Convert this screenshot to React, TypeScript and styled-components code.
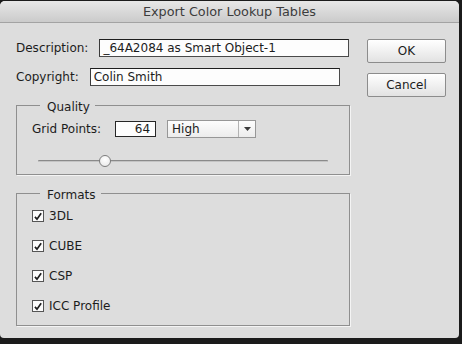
import React, { useState } from 'react';
import styled, { createGlobalStyle } from 'styled-components';

const GlobalStyle = createGlobalStyle`
    html, body {
        margin: 0;
        padding: 0;
        background: #1b1b1b;
    }
    body {
        font-family: "DejaVu Sans", "Liberation Sans", sans-serif;
        font-size: 12px;
        color: #1c1c1c;
    }
`;

const formats = ['3DL', 'CUBE', 'CSP', 'ICC Profile'];

export default function App() {
    const [gridPoints] = useState(64);
    const [checked, setChecked] = useState<boolean[]>([true, true, true, true]);
    // slider position, 0..1
    const sliderValue = 0.23;

    const toggle = (i: number) => {
        setChecked(checked.map((c, idx) => (idx === i ? !c : c)));
    };

    return (
        <>
            <GlobalStyle />
            <Window>
                <TitleBar>Export Color Lookup Tables</TitleBar>
                <Body>
                    <LeftColumn>
                        <FieldRow>
                            <Label>Description:</Label>
                            <TextBox>_64A2084 as Smart Object-1</TextBox>
                        </FieldRow>
                        <FieldRow>
                            <Label>Copyright:</Label>
                            <TextBox>Colin Smith</TextBox>
                        </FieldRow>

                        <GroupBox $bottom={7}>
                            <Legend>Quality</Legend>
                            <GridRow>
                                <Label>Grid Points:</Label>
                                <NumberBox>{gridPoints}</NumberBox>
                                <Select>
                                    <SelectText>High</SelectText>
                                    <SelectArrow>
                                        <svg width="7" height="4" viewBox="0 0 7 4">
                                            <path d="M0 0 H7 L3.5 4 Z" fill="#3a3a3a" />
                                        </svg>
                                    </SelectArrow>
                                </Select>
                            </GridRow>
                            <Slider>
                                <Thumb style={{ left: `${sliderValue * 100}%` }} />
                            </Slider>
                        </GroupBox>

                        <GroupBox $bottom={13} $gap={-1}>
                            <Legend>Formats</Legend>
                            <CheckList>
                                {formats.map((f, i) => (
                                    <CheckRow key={f} onClick={() => toggle(i)}>
                                        <CheckBox>
                                            {checked[i] && (
                                                <svg width="12" height="12" viewBox="0 0 12 12">
                                                    <path d="M2.3 5.8 L4.8 8.6 L9.8 1.6" fill="none" stroke="#1d1d1d" strokeWidth="2" />
                                                </svg>
                                            )}
                                        </CheckBox>
                                        <span>{f}</span>
                                    </CheckRow>
                                ))}
                            </CheckList>
                        </GroupBox>
                    </LeftColumn>

                    <RightColumn>
                        <Button>OK</Button>
                        <Button>Cancel</Button>
                    </RightColumn>
                </Body>
            </Window>
        </>
    );
}

const Window = styled.div`
    width: 459px;
    height: 337px;
    margin-top: 1px;
    background: #dddddd;
    border-radius: 5px 5px 4px 4px;
    overflow: hidden;
    display: flex;
    flex-direction: column;
`;

const TitleBar = styled.div`
    height: 21px;
    line-height: 21px;
    text-align: center;
    font-size: 12.8px;
    color: #3c3c3c;
    background: linear-gradient(#e7e7e7, #cbcbcb);
    border-bottom: 1px solid #a3a3a3;
`;

const Body = styled.div`
    display: flex;
    padding: 16px 0 0 16px;
`;

const LeftColumn = styled.div`
    width: 334px;
    display: flex;
    flex-direction: column;
    gap: 11px;
`;

const RightColumn = styled.div`
    margin-left: 17px;
    display: flex;
    flex-direction: column;
    gap: 10px;
`;

const FieldRow = styled.div`
    display: flex;
    align-items: center;
    gap: 11px;
    height: 18px;
`;

const Label = styled.span`
    white-space: nowrap;
`;

const TextBox = styled.div`
    box-sizing: border-box;
    width: 250px;
    height: 18px;
    padding: 0 3px;
    line-height: 16px;
    background: #fdfdfd;
    border: 1px solid #2e2e2e;
    border-color: #1e1e1e #4a4a4a #4a4a4a #3a3a3a;
    white-space: nowrap;
    overflow: hidden;
`;

const Button = styled.button`
    box-sizing: border-box;
    width: 79px;
    height: 24px;
    padding: 0;
    font-family: inherit;
    font-size: 12px;
    color: #1c1c1c;
    background: linear-gradient(#ffffff, #f2f2f2 45%, #e2e2e2);
    border: 1px solid #8c8c8c;
    border-radius: 2px;
`;

const GroupBox = styled.fieldset<{ $bottom: number; $gap?: number }>`
    margin: ${p => p.$gap ?? 0}px 0 0;
    padding: 0 15px ${p => p.$bottom}px;
    min-width: 0;
    border: 1px solid #8f8f8f;
    box-shadow: 1px 1px 0 #f4f4f4;
`;

const Legend = styled.legend`
    margin-left: 8px;
    padding: 4px 5px 0 7px;
    line-height: 12px;
`;

const GridRow = styled.div`
    display: flex;
    align-items: center;
    height: 18px;
    margin-top: 7px;
`;

const NumberBox = styled.div`
    box-sizing: border-box;
    width: 41px;
    height: 16px;
    margin-left: 14px;
    padding-right: 5px;
    line-height: 14px;
    text-align: right;
    background: #fdfdfd;
    border: 1px solid #262626;
`;

const Select = styled.div`
    box-sizing: border-box;
    width: 89px;
    height: 18px;
    margin-left: 11px;
    display: flex;
    background: linear-gradient(#fdfdfd, #ececec);
    border: 1px solid #979797;
`;

const SelectText = styled.span`
    flex: 1;
    padding-left: 4px;
    line-height: 16px;
`;

const SelectArrow = styled.span`
    width: 16px;
    display: flex;
    align-items: center;
    justify-content: center;
    border-left: 1px solid #b3b3b3;
`;

const Slider = styled.div`
    position: relative;
    width: 290px;
    height: 12px;
    margin: 17px 0 0 6px;

    &::before {
        content: '';
        position: absolute;
        left: 0;
        right: 0;
        top: 5px;
        height: 1px;
        background: #8a8a8a;
        border-bottom: 1px solid #c4c4c4;
        border-radius: 1px;
    }
`;

const Thumb = styled.div`
    position: absolute;
    top: 0;
    box-sizing: border-box;
    width: 12px;
    height: 12px;
    margin-left: -6px;
    border-radius: 50%;
    background: radial-gradient(circle at 50% 35%, #ffffff, #e6e6e6);
    border: 1px solid #7d7d7d;
`;

const CheckList = styled.div`
    display: flex;
    flex-direction: column;
    gap: 18px;
    margin-top: 9px;
`;

const CheckRow = styled.label`
    display: flex;
    align-items: center;
    gap: 5px;
    height: 12px;
    line-height: 12px;
    cursor: default;
`;

const CheckBox = styled.span`
    box-sizing: border-box;
    width: 12px;
    height: 12px;
    display: flex;
    background: #fbfbfb;
    border: 1px solid #555555;
`;
